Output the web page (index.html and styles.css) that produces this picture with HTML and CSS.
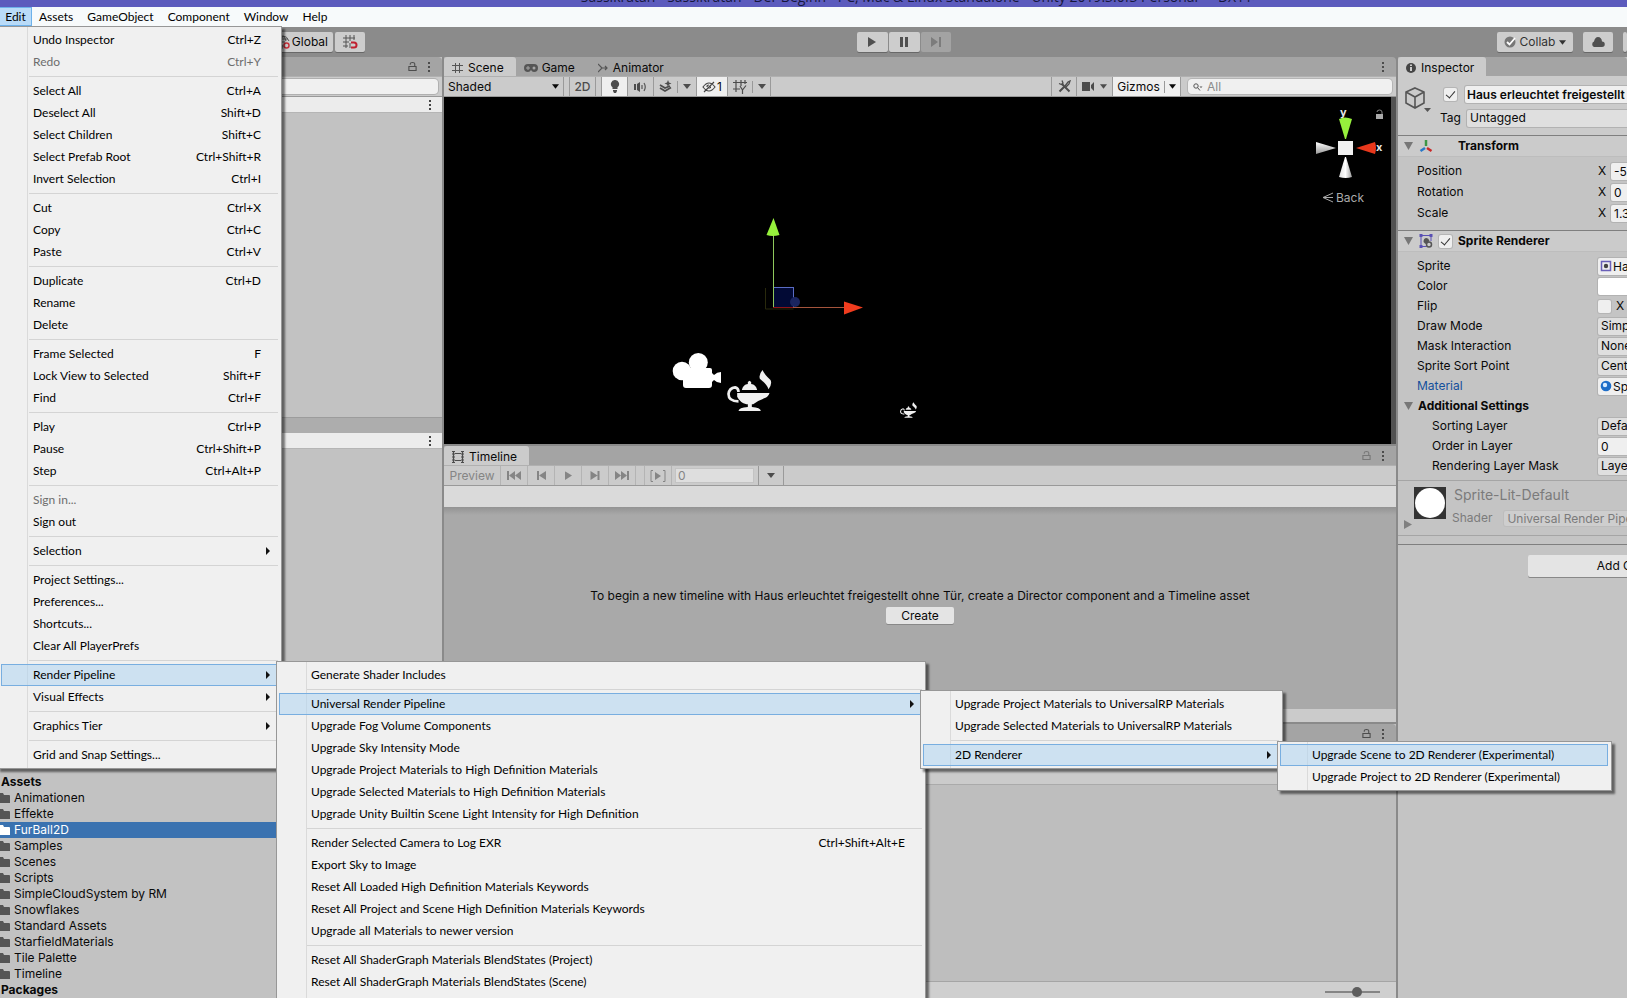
FILE: index.html
```
<!DOCTYPE html>
<html lang="en">
<head>
<meta charset="utf-8">
<title>Unity Editor</title>
<link rel="stylesheet" href="styles.css">
</head>
<body>
<svg class="defs" aria-hidden="true">
  <symbol id="lock" viewBox="0 0 10 11"><path d="M1 5.500h8v4.500h-8zM2.500 3.500V2.500q0-1.500 2.500-1.500t2.500 1.500v3" fill="none" stroke="currentColor" stroke-width="1.200"/></symbol>
  <symbol id="dots" viewBox="0 0 4 12"><path d="M1 1h2v2H1zM1 5h2v2H1zM1 9h2v2H1z" fill="currentColor"/></symbol>
  <symbol id="down" viewBox="0 0 8 5"><path d="M0 0h8L4 5z" fill="currentColor"/></symbol>
  <symbol id="folder" viewBox="0 0 12 12"><path d="M0 1h5l1 2h5q1 0 1 1v7H0z" fill="currentColor"/></symbol>
  <symbol id="next" viewBox="0 0 12 10"><path d="M1 0l7 5-7 5zM9 0h2v10H9z" fill="currentColor"/></symbol>
  <symbol id="play" viewBox="0 0 8 10"><path d="M0 0l8 5-8 5z" fill="currentColor"/></symbol>
  <symbol id="lamp" viewBox="0 0 134 123">
    <path d="M34 94Q4 94 4 72 6 54 24 52 34 54 34 66" fill="none" stroke="#efefef" stroke-width="8"/>
    <path d="M30 69H127Q124 81 111 85Q90 92 78 103H58Q38 97 30 80zM44 60Q48 44 62 42V36l5-4 5 4v6Q86 44 90 60zM62 103h12v8q26 2 27 12H34q1-10 28-12zM106 0Q112 14 130 30Q136 42 124 58Q122 46 98 26Q94 14 106 0z" fill="#efefef"/>
  </symbol>
</svg>

<header class="titlebar"><span>Sassikratan - Sassikratan - Der Beginn - PC, Mac &amp; Linux Standalone - Unity 2019.3.0f3 Personal - &lt;DX11&gt;</span></header>

<nav class="menubar">
  <div class="menubar-item">
    <button class="menubar-button open">Edit</button>
    <ul class="menu menu-edit">
      <li><button class="entry">Undo Inspector<kbd>Ctrl+Z</kbd></button></li>
      <li><button class="entry" disabled>Redo<kbd>Ctrl+Y</kbd></button></li>
      <li class="rule"></li>
      <li><button class="entry">Select All<kbd>Ctrl+A</kbd></button></li>
      <li><button class="entry">Deselect All<kbd>Shift+D</kbd></button></li>
      <li><button class="entry">Select Children<kbd>Shift+C</kbd></button></li>
      <li><button class="entry">Select Prefab Root<kbd>Ctrl+Shift+R</kbd></button></li>
      <li><button class="entry">Invert Selection<kbd>Ctrl+I</kbd></button></li>
      <li class="rule"></li>
      <li><button class="entry">Cut<kbd>Ctrl+X</kbd></button></li>
      <li><button class="entry">Copy<kbd>Ctrl+C</kbd></button></li>
      <li><button class="entry">Paste<kbd>Ctrl+V</kbd></button></li>
      <li class="rule"></li>
      <li><button class="entry">Duplicate<kbd>Ctrl+D</kbd></button></li>
      <li><button class="entry">Rename</button></li>
      <li><button class="entry">Delete</button></li>
      <li class="rule"></li>
      <li><button class="entry">Frame Selected<kbd>F</kbd></button></li>
      <li><button class="entry">Lock View to Selected<kbd>Shift+F</kbd></button></li>
      <li><button class="entry">Find<kbd>Ctrl+F</kbd></button></li>
      <li class="rule"></li>
      <li><button class="entry">Play<kbd>Ctrl+P</kbd></button></li>
      <li><button class="entry">Pause<kbd>Ctrl+Shift+P</kbd></button></li>
      <li><button class="entry">Step<kbd>Ctrl+Alt+P</kbd></button></li>
      <li class="rule"></li>
      <li><button class="entry" disabled>Sign in...</button></li>
      <li><button class="entry">Sign out</button></li>
      <li class="rule"></li>
      <li><button class="entry parent">Selection</button></li>
      <li class="rule"></li>
      <li><button class="entry">Project Settings...</button></li>
      <li><button class="entry">Preferences...</button></li>
      <li><button class="entry">Shortcuts...</button></li>
      <li><button class="entry">Clear All PlayerPrefs</button></li>
      <li class="rule"></li>
      <li>
        <button class="entry parent active">Render Pipeline</button>
        <ul class="menu submenu menu-pipeline">
          <li><button class="entry">Generate Shader Includes</button></li>
          <li class="rule"></li>
          <li>
            <button class="entry parent active">Universal Render Pipeline</button>
            <ul class="menu submenu menu-universal">
              <li><button class="entry">Upgrade Project Materials to UniversalRP Materials</button></li>
              <li><button class="entry">Upgrade Selected Materials to UniversalRP Materials</button></li>
              <li class="rule"></li>
              <li>
                <button class="entry parent active">2D Renderer</button>
                <ul class="menu submenu menu-renderer">
                  <li><button class="entry active">Upgrade Scene to 2D Renderer (Experimental)</button></li>
                  <li><button class="entry">Upgrade Project to 2D Renderer (Experimental)</button></li>
                </ul>
              </li>
            </ul>
          </li>
          <li><button class="entry">Upgrade Fog Volume Components</button></li>
          <li><button class="entry">Upgrade Sky Intensity Mode</button></li>
          <li><button class="entry">Upgrade Project Materials to High Definition Materials</button></li>
          <li><button class="entry">Upgrade Selected Materials to High Definition Materials</button></li>
          <li><button class="entry">Upgrade Unity Builtin Scene Light Intensity for High Definition</button></li>
          <li class="rule"></li>
          <li><button class="entry">Render Selected Camera to Log EXR<kbd>Ctrl+Shift+Alt+E</kbd></button></li>
          <li><button class="entry">Export Sky to Image</button></li>
          <li><button class="entry">Reset All Loaded High Definition Materials Keywords</button></li>
          <li><button class="entry">Reset All Project and Scene High Definition Materials Keywords</button></li>
          <li><button class="entry">Upgrade all Materials to newer version</button></li>
          <li class="rule"></li>
          <li><button class="entry">Reset All ShaderGraph Materials BlendStates (Project)</button></li>
          <li><button class="entry">Reset All ShaderGraph Materials BlendStates (Scene)</button></li>
        </ul>
      </li>
      <li><button class="entry parent">Visual Effects</button></li>
      <li class="rule"></li>
      <li><button class="entry parent">Graphics Tier</button></li>
      <li class="rule"></li>
      <li><button class="entry">Grid and Snap Settings...</button></li>
    </ul>
  </div>
  <button class="menubar-button">Assets</button>
  <button class="menubar-button">GameObject</button>
  <button class="menubar-button">Component</button>
  <button class="menubar-button">Window</button>
  <button class="menubar-button">Help</button>
</nav>

<div class="toolbar">
  <div class="tools">
    <button class="tool global">
      <svg width="14" height="16" viewBox="0 0 14 16" fill="none"><path d="M7 2a6 6 0 1 0 0 12M7 2q4 0 6 5M7 2q-4 5 0 11M1 8h8M7 2q3 3 3 5M2 5h10" stroke="#555"/><circle cx="10.500" cy="11.500" r="2.500" stroke="#c8323c" stroke-width="1.500"/></svg>Global</button>
    <button class="tool snap" aria-label="Grid snapping">
      <svg width="16" height="16" viewBox="0 0 16 16" fill="none"><path d="M4 1v13M8 1v6M12 1v5M1 4h12M1 8h6M1 12h5M8 9v5" stroke="#555"/><path d="M9 8.500h3a2.500 2.500 0 0 1 0 5H9" stroke="#c02030" stroke-width="2"/></svg></button>
  </div>
  <span class="space-left"></span>
  <div class="playback">
    <button class="tool" aria-label="Play"><svg width="8" height="10"><use href="#play"/></svg></button>
    <button class="tool" aria-label="Pause"><svg width="8" height="10" viewBox="0 0 8 10"><path d="M0 0h3v10H0zM5 0h3v10H5z" fill="currentColor"/></svg></button>
    <button class="tool" aria-label="Step" disabled><svg width="12" height="10"><use href="#next"/></svg></button>
  </div>
  <span class="space-right"></span>
  <div class="services">
    <button class="tool collab"><svg width="12" height="12" viewBox="0 0 12 12"><circle cx="6" cy="6" r="5.500" fill="#777"/><path d="M3 6l2.500 2.500L11 2" fill="none" stroke="#fff" stroke-width="1.800"/></svg>Collab<svg width="7" height="5"><use href="#down"/></svg></button>
    <button class="tool cloud" aria-label="Services"><svg width="14" height="10" viewBox="0 0 14 10"><path d="M3 10a3 3 0 0 1 0-5.500Q4 0 7 0q3.500 0 4 4.500a2.700 2.700 0 0 1 0 5.500z" fill="currentColor"/></svg></button>
    <button class="tool account" aria-label="Account"></button>
  </div>
</div>

<main class="workspace">
  <div class="left">
    <div class="upper">
      <section class="hierarchy">
        <div class="tabs"><span class="fill"></span><svg width="9" height="11"><use href="#lock"/></svg><svg class="end" width="4" height="12"><use href="#dots"/></svg></div>
        <div class="bar"><input class="search" aria-label="Search hierarchy"></div>
        <div class="scene-row"><svg width="4" height="12"><use href="#dots"/></svg></div>
        <div class="tree-a"></div>
        <div class="band"></div>
        <div class="scene-row"><svg width="4" height="12"><use href="#dots"/></svg></div>
        <div class="tree-b"></div>
      </section>
      <div class="center">
        <section class="scene">
          <div class="tabs">
            <button class="tab current"><svg width="11" height="12" viewBox="0 0 11 12"><path d="M3.500 1v10M7.500 1v10M0 3.500h11M0 8.500h11" stroke="currentColor" fill="none"/></svg>Scene</button>
            <button class="tab game"><svg width="14" height="8" viewBox="0 0 14 8"><path d="M4 0h6a4 4 0 0 1 0 8Q8 8 7 6 6 8 4 8a4 4 0 0 1 0-8z" fill="#555"/><circle cx="10" cy="4" r="1.500" fill="#a5a5a5"/><path d="M2 4h4M4 2v4" stroke="#a5a5a5"/></svg>Game</button>
            <button class="tab animator"><svg width="10" height="10" viewBox="0 0 10 10"><path d="M0 1l4 4-4 4M4 5h5M7 3l2 2-2 2" fill="none" stroke="#555" stroke-width="1.200"/></svg>Animator</button>
            <span class="fill"></span><svg class="end" width="4" height="12"><use href="#dots"/></svg>
          </div>
          <div class="bar">
            <button class="cell shaded">Shaded<svg width="7" height="5"><use href="#down"/></svg></button>
            <span class="notch"></span>
            <button class="cell two-d">2D</button>
            <span class="notch"></span>
            <button class="cell lit" aria-label="Lighting"><svg width="10" height="13" viewBox="0 0 10 13"><path d="M5 0a4 4 0 0 1 2.500 7.200V9h-5V7.200A4 4 0 0 1 5 0zM3 10h4v1L6 13H4l-1-2z" fill="#4c4c4c"/></svg></button>
            <button class="cell" aria-label="Audio"><svg width="13" height="10" viewBox="0 0 13 10"><path d="M0 2h2v6H0zM3 2l3-2v10L3 8z" fill="#4c4c4c"/><path d="M8 3v4M10 1q2.500 4 0 8" stroke="#555" stroke-width="1.200" fill="none"/></svg></button>
            <button class="cell split" aria-label="Effects"><svg width="13" height="13" viewBox="0 0 13 13"><path d="M9 0l1 2.500L12.500 3.500 10 4.500 9 7 8 4.500 5.500 3.500 8 2.500z" fill="#4c4c4c"/><path d="M1 5l5 3 5-2M1 8l5 3 6-3.500" fill="none" stroke="#4c4c4c" stroke-width="1.800"/></svg><i></i><svg width="8" height="5"><use href="#down"/></svg></button>
            <button class="cell lit eye"><svg width="14" height="12" viewBox="0 0 14 12"><path d="M1 6q6-8 12 0-6 8-12 0zM2 11L12 1M5 6q0-2 2-2" fill="none" stroke="#444" stroke-width="1.200"/><path d="M6 8l3-3v2z" fill="#444"/></svg>1</button>
            <button class="cell split" aria-label="Grid"><svg width="14" height="14" viewBox="0 0 14 14"><path d="M3 0v12M8 0v6M12 0v4M0 2.500h14M0 9h7M7 6l2.500 4L13 5.500M9.500 10v4" stroke="#4c4c4c" stroke-width="1.200" fill="none"/></svg><i></i><svg width="8" height="5"><use href="#down"/></svg></button>
            <span class="fill"></span>
            <button class="cell first" aria-label="Tools"><svg width="13" height="13" viewBox="0 0 13 13"><path d="M4 4l7.500 7.500M1.500 11.500l5-5" stroke="#4c4c4c" stroke-width="2"/><path d="M7 6l3-4 2-1-1 3-3 3M1 3.500l2.500 1L5 3 4 .5" stroke="#4c4c4c" stroke-width="1.300" fill="none"/></svg></button>
            <button class="cell camera" aria-label="Camera"><svg width="12" height="9" viewBox="0 0 12 9"><path d="M0 0h8v9H0zM9 3l3-3v9L9 6z" fill="#4c4c4c"/></svg><svg width="7" height="5"><use href="#down"/></svg></button>
            <button class="cell lit gizmos">Gizmos<i></i><svg width="7" height="5"><use href="#down"/></svg></button>
            <label class="find"><svg width="10" height="8" viewBox="0 0 10 8"><circle cx="3" cy="3" r="2.200" fill="none" stroke="#555"/><path d="M4.500 4.500L7 7.500" stroke="#555"/><path d="M6.500 3.500h3L8 5z" fill="#555"/></svg><input aria-label="Search scene" placeholder="All"></label>
          </div>
          <div class="viewport">
            <svg class="objects" width="500" height="310" viewBox="0 0 500 310">
              <path d="M321.500 191v21h28" fill="none" stroke="#29290c"/>
              <rect x="329.500" y="190.500" width="20" height="20" fill="#020a35" stroke="#5a6cc4"/>
              <circle cx="351" cy="205" r="5" fill="#1a2560"/>
              <path d="M329.500 210V138" stroke="#8fc85c"/><path d="M329.500 121l-7 17q6 2 13 0z" fill="#96f03c"/>
              <path d="M329 210.500h28" stroke="#8c1418"/><path d="M349 210.500h52" stroke="#a5543c"/><path d="M419 210.500l-19-6v13z" fill="#f03c1e"/>
              <g fill="#fff"><circle cx="238" cy="274" r="9.300"/><circle cx="254.300" cy="265.500" r="9.500"/><path d="M239 271h27q2 0 2 2v3l2 2q3-3 7-3v11q-4 0-7-3l-2 2v3q0 3-3 3h-23q-3 0-3-3z"/></g>
              <use href="#lamp" x="283" y="273" width="45" height="41"/>
              <use href="#lamp" x="456" y="305" width="17" height="16"/>
            </svg>
            <svg class="compass" width="81" height="105" viewBox="0 0 81 105">
              <defs>
                <linearGradient id="gx"><stop offset="0" stop-color="#ddd"/><stop offset=".5" stop-color="#fff"/><stop offset="1" stop-color="#999"/></linearGradient>
                <linearGradient id="gy" x2="0" y2="1"><stop offset="0" stop-color="#fff"/><stop offset="1" stop-color="#999"/></linearGradient>
              </defs>
              <text x="30" y="11" class="axis">y</text><text x="66" y="46" class="axis">x</text>
              <path d="M29 14q6-3 13 0l-6 20h-1z" fill="#96f03c"/><path d="M28 36h15v14H28z" fill="#f0f0f0"/>
              <path d="M6 37l20 6-20 6z" fill="url(#gy)"/><path d="M46 43l19-6q2 6 0 12z" fill="#e8381c"/><path d="M35 52h1l6 20q-6 2-13 0z" fill="url(#gx)"/>
              <path d="M23 88l-10 4.500 10 4.500M13 92.500h10" fill="none" stroke="#aaa"/>
              <text x="26" y="97" class="view-name">Back</text>
              <path d="M66 9h7v5h-7z" fill="#aaa"/><path d="M67 7q0-2 2.500-2T72 7v2" fill="none" stroke="#888"/>
            </svg>
          </div>
        </section>
        <section class="timeline">
          <div class="tabs">
            <button class="tab current"><svg width="12" height="12" viewBox="0 0 12 12"><path d="M1.500 0v12M10.500 0v12M3 2.500h6M3 9.500h6" stroke="#4c4c4c" stroke-width="1.200" fill="none"/><path d="M0 .5h3M0 3h3M0 6h3M0 9h3M0 11.500h3M9 .5h3M9 3h3M9 6h3M9 9h3M9 11.500h3" stroke="#4c4c4c"/></svg>Timeline</button>
            <span class="fill"></span><svg class="faded" width="9" height="11"><use href="#lock"/></svg><svg class="end" width="4" height="12"><use href="#dots"/></svg>
          </div>
          <div class="bar transport">
            <button class="cell preview" disabled>Preview</button>
            <button class="cell" aria-label="Start" disabled><svg width="14" height="9" viewBox="0 0 14 9"><path d="M0 0h2v9H0zM8 0v9L2 4.500zM14 0v9L8 4.500z" fill="currentColor"/></svg></button>
            <button class="cell" aria-label="Previous frame" disabled><svg width="9" height="9" viewBox="0 0 9 9"><path d="M0 0h2v9H0zM9 0v9L2 4.500z" fill="currentColor"/></svg></button>
            <button class="cell" aria-label="Play timeline" disabled><svg width="7" height="9" viewBox="0 0 8 10"><use href="#play"/></svg></button>
            <button class="cell" aria-label="Next frame" disabled><svg width="10" height="9" viewBox="0 0 9 9"><path d="M7 0h2v9H7zM0 0v9l7-4.500z" fill="currentColor"/></svg></button>
            <button class="cell" aria-label="End" disabled><svg width="14" height="9" viewBox="0 0 14 9"><path d="M12 0h2v9h-2zM6 0v9l6-4.500zM0 0v9l6-4.500z" fill="currentColor"/></svg></button>
            <span class="slot"></span>
            <button class="cell" aria-label="Play range" disabled><svg width="16" height="12" viewBox="0 0 16 12"><path d="M3 .5H1v11h2M13 .5h2v11h-2" fill="none" stroke="currentColor"/><path d="M5 2l6 4-6 4z" fill="currentColor"/></svg></button>
            <input class="frame" aria-label="Frame" value="0" disabled>
            <button class="cell pick" aria-label="Timeline selector"><svg width="8" height="5"><use href="#down"/></svg></button>
          </div>
          <div class="ruler"></div>
          <div class="empty">
            <p>To begin a new timeline with Haus erleuchtet freigestellt ohne Tür, create a Director component and a Timeline asset</p>
            <button class="push">Create</button>
          </div>
          <div class="scroller"></div>
        </section>
      </div>
    </div>
    <section class="project">
      <div class="tabs"><span class="fill"></span><svg width="9" height="11"><use href="#lock"/></svg><svg class="end" width="4" height="12"><use href="#dots"/></svg></div>
      <div class="project-body">
        <ul class="folders">
          <li class="root">Assets</li>
          <li><svg width="12" height="12"><use href="#folder"/></svg>Animationen</li>
          <li><svg width="12" height="12"><use href="#folder"/></svg>Effekte</li>
          <li class="picked"><svg width="12" height="12"><use href="#folder"/></svg>FurBall2D</li>
          <li><svg width="12" height="12"><use href="#folder"/></svg>Samples</li>
          <li><svg width="12" height="12"><use href="#folder"/></svg>Scenes</li>
          <li><svg width="12" height="12"><use href="#folder"/></svg>Scripts</li>
          <li><svg width="12" height="12"><use href="#folder"/></svg>SimpleCloudSystem by RM</li>
          <li><svg width="12" height="12"><use href="#folder"/></svg>Snowflakes</li>
          <li><svg width="12" height="12"><use href="#folder"/></svg>Standard Assets</li>
          <li><svg width="12" height="12"><use href="#folder"/></svg>StarfieldMaterials</li>
          <li><svg width="12" height="12"><use href="#folder"/></svg>Tile Palette</li>
          <li><svg width="12" height="12"><use href="#folder"/></svg>Timeline</li>
          <li class="root">Packages</li>
        </ul>
        <div class="files">
          <div class="crumbs"></div>
          <div class="grid"></div>
          <div class="status"><input type="range" aria-label="Icon size" min="0" max="100" value="60"></div>
        </div>
      </div>
    </section>
  </div>

  <aside class="inspector">
    <div class="tabs"><button class="tab current"><svg width="10" height="10" viewBox="0 0 10 10"><circle cx="5" cy="5" r="5" fill="#444"/><path d="M4 4h2v4H4zM4 1.500h2V3H4z" fill="#cbcbcb"/></svg>Inspector</button></div>
    <div class="object">
      <svg class="cube" width="26" height="27" viewBox="0 0 26 27"><path d="M10 2l9 4v11L10 22l-9-5V6zM1 6l9 5 9-5M10 11v11" fill="none" stroke="#555" stroke-width="1.600"/><path d="M19 22h7l-3.500 4z" fill="#555"/></svg>
      <div class="object-lines">
        <div class="object-line"><input type="checkbox" class="tick" aria-label="Active" checked><input class="field name" aria-label="Name" value="Haus erleuchtet freigestellt ohne Tür"></div>
        <div class="object-line"><label for="tag">Tag</label><select id="tag" class="field drop"><option>Untagged</option></select></div>
      </div>
    </div>
    <section class="component transform">
      <h2><svg class="fold" width="9" height="8" viewBox="0 0 9 8"><path d="M0 0h9L4.500 8z" fill="currentColor"/></svg><svg width="14" height="14" viewBox="0 0 13 14"><path d="M6.500 1v6" stroke="#3c9646" stroke-width="2.500"/><path d="M5.500 9L1 12" stroke="#2878c8" stroke-width="2.500"/><path d="M7.500 9l4.500 3" stroke="#c82828" stroke-width="2.500"/></svg><span class="tick-gap"></span>Transform</h2>
      <div class="prop"><label for="px">Position</label><span>X</span><input id="px" class="field" value="-5.2"></div>
      <div class="prop"><label for="rx">Rotation</label><span>X</span><input id="rx" class="field" value="0"></div>
      <div class="prop"><label for="sx">Scale</label><span>X</span><input id="sx" class="field" value="1.3"></div>
    </section>
    <section class="component">
      <h2><svg class="fold" width="9" height="8" viewBox="0 0 9 8"><path d="M0 0h9L4.500 8z" fill="currentColor"/></svg><svg width="14" height="14" viewBox="0 0 13 14"><path d="M7 12.500H1.500v-11h10V7" fill="none" stroke="#5a50b4"/><path d="M0 0h3v3H0zM10 0h3v3h-3zM0 11h3v3H0z" fill="#5a50b4"/><path d="M4 8q0-4 3-4 2 0 3 3l-4 3z" fill="#555"/><circle cx="9.500" cy="10.500" r="2.500" fill="none" stroke="#555" stroke-width="1.500"/></svg><input type="checkbox" class="tick" aria-label="Sprite Renderer enabled" checked>Sprite Renderer</h2>
      <div class="prop"><label for="sp">Sprite</label><svg class="pre" width="12" height="12" viewBox="0 0 12 12"><path d="M1.500 1.500h9v9h-9z" fill="none" stroke="#6a60b8" stroke-width="1.500"/><circle cx="6" cy="6" r="2.200" fill="#444"/></svg><input id="sp" class="field ref" value="Haus erleuchtet"></div>
      <div class="prop"><label for="co">Color</label><input id="co" class="field white"></div>
      <div class="prop"><label for="fl">Flip</label><input id="fl" type="checkbox" class="tick flip"><span>X</span></div>
      <div class="prop"><label for="dm">Draw Mode</label><select id="dm" class="field drop"><option>Simple</option></select></div>
      <div class="prop"><label for="mi">Mask Interaction</label><select id="mi" class="field drop"><option>None</option></select></div>
      <div class="prop"><label for="ss">Sprite Sort Point</label><select id="ss" class="field drop"><option>Center</option></select></div>
      <div class="prop linked"><label for="ma">Material</label><svg class="pre" width="12" height="12" viewBox="0 0 12 12"><circle cx="6" cy="6" r="5.300" fill="#1e6ec8"/><circle cx="5" cy="5" r="2.200" fill="#d8ecff"/></svg><input id="ma" class="field ref" value="Sprite-Lit-Default"></div>
      <h3><svg width="9" height="8" viewBox="0 0 9 8"><path d="M0 0h9L4.500 8z" fill="currentColor"/></svg>Additional Settings</h3>
      <div class="prop nested"><label for="sl">Sorting Layer</label><select id="sl" class="field drop"><option>Default</option></select></div>
      <div class="prop nested"><label for="ol">Order in Layer</label><input id="ol" class="field" value="0"></div>
      <div class="prop nested"><label for="rl">Rendering Layer Mask</label><select id="rl" class="field drop"><option>Layer1</option></select></div>
    </section>
    <section class="material">
      <svg class="unfold" width="8" height="9" viewBox="0 0 8 9"><path d="M0 0v9l8-4.500z" fill="#808080"/></svg>
      <svg width="32" height="32" viewBox="0 0 32 32"><path d="M0 0h32v32H0z" fill="#333"/><circle cx="16" cy="16" r="15" fill="#fff"/></svg>
      <div class="material-text">
        <div class="material-name">Sprite-Lit-Default</div>
        <div class="shader"><label for="sh">Shader</label><select id="sh" class="field drop" disabled><option>Universal Render Pipeline/2D/Sprite-Lit-Default</option></select></div>
      </div>
    </section>
    <div class="add"><button class="push">Add Component</button></div>
  </aside>
</main>
</body>
</html>
```

FILE: styles.css
```
* { box-sizing: border-box; }
body {
  margin: 0; height: 100vh; overflow: hidden;
  display: flex; flex-direction: column;
  font: 12px/16px Inter, "Liberation Sans", sans-serif;
  color: #090909; background: #8a8a8a;
}
button, input, select { font: inherit; color: inherit; margin: 0; padding: 0; border: 0; border-radius: 0; background: none; }
button { white-space: nowrap; }
input { min-width: 0; }
ul, p, h2, h3 { margin: 0; padding: 0; list-style: none; font-size: inherit; }
svg { flex: none; display: block; }
.defs { position: absolute; width: 0; height: 0; }
.fill { flex: 1; }

/* Title and menu bar */
.titlebar { flex: none; height: 7px; background: #5c5bbd; display: flex; align-items: flex-end; justify-content: center; padding: 0 0 3px 214px; color: #17173c; font: 14px/14px "Open Sans", sans-serif; white-space: nowrap; overflow: hidden; }
.menubar { flex: none; height: 20px; display: flex; background: #f7fafb; font-family: Lato, "Open Sans", sans-serif; color: #000; }
.menubar-item { position: relative; }
.menubar-button { height: 19px; padding: 0 7px; }
.menubar-button.open { width: 32px; padding: 0; background: #b9dbf8; border: 1px solid #6db1ea; border-left: 0; }

.menu { position: absolute; z-index: 5; padding: 2px 3px; border: 1px solid #979797; background: linear-gradient(90deg, transparent 29px, #dadada 29px, #dadada 30px, transparent 30px) #f0f0f0; box-shadow: 3px 3px 2px rgba(0, 0, 0, .5); }
.menu li { position: relative; }
.menu-edit { left: -3px; top: 19px; width: 285px; }
.submenu { left: calc(100% - 2px); top: -3px; padding-left: 2px; }
.menu-pipeline { width: 650px; padding-bottom: 12px; }
.menu-universal { width: 363px; }
.menu-renderer { width: 335px; }
.entry { display: flex; align-items: center; width: 100%; height: 22px; padding: 0 16px 0 31px; border: 1px solid transparent; text-align: left; }
.entry:disabled { color: #6d6d6d; }
.entry kbd { font: inherit; margin-left: auto; }
.entry.active { background: rgba(176, 214, 243, .55); border-color: #78aee0; }
.parent { padding-right: 7px; }
.parent::after { content: ""; margin-left: auto; border: 4px solid transparent; border-left-color: #111; border-right: 0; }
.rule { height: 7px; margin-left: 28px; padding-top: 3px; }
.rule::after { content: ""; display: block; height: 1px; background: #d4d4d4; }

/* Main toolbar */
.toolbar { flex: none; height: 30px; display: flex; align-items: center; background: #8b8b8b; }
.tool { height: 20px; display: flex; align-items: center; justify-content: center; background: #cdcdcd; border-radius: 2px; box-shadow: 0 1px 0 #686868; color: #505050; }
.tools { width: 365px; display: flex; justify-content: flex-end; gap: 2px; }
.global { gap: 2px; padding-right: 5px; color: #090909; }
.snap { width: 30px; }
.space-left { flex: 9; }
.space-right { flex: 10; }
.playback { display: flex; gap: 1px; }
.playback .tool { width: 31px; }
.playback .tool:disabled { width: 30px; background: #a3a3a3; color: #7c7c7c; box-shadow: none; }
.services { display: flex; gap: 10px; }
.collab { width: 76px; gap: 4px; color: #333; }
.cloud { width: 30px; }
.account { width: 4px; }

/* Shell */
.workspace { flex: 1; min-height: 0; display: flex; gap: 2px; }
.left { flex: 1; min-width: 0; display: flex; flex-direction: column; gap: 2px; }
.upper { flex: 665 1 0; min-height: 0; display: flex; gap: 2px; }
.center { flex: 1; min-width: 0; display: flex; flex-direction: column; gap: 2px; }
.hierarchy { width: 442px; display: flex; flex-direction: column; background: #c2c2c2; }
.scene { flex: 387 1 0; min-height: 0; display: flex; flex-direction: column; }
.timeline { flex: 276 1 0; min-height: 0; display: flex; flex-direction: column; background: #a9a9a9; }
.project { flex: 274 1 0; min-height: 0; display: flex; flex-direction: column; background: #c2c2c2; }

.tabs { flex: none; height: 19px; display: flex; align-items: center; gap: 10px; background: #a4a4a4; color: #4c4c4c; border-radius: 0 4px 0 0; }
.tab { height: 19px; display: flex; align-items: center; gap: 5px; padding: 2px 12px 0 8px; color: #090909; }
.tab.current { background: #cbcbcb; border-radius: 3px 3px 0 0; }
.tab svg { color: #555; }
.tabs .tab + .tab { margin-left: -10px; }
.tabs .game { gap: 4px; }
.tabs .animator { padding-left: 11px; }
.end { margin-right: 11px; }
.faded { opacity: .5; }
.bar { flex: none; height: 21px; display: flex; background: #cbcbcb; border-top: 1px solid #b0b0b0; border-bottom: 1px solid #999; }
.cell { height: 19px; min-width: 26px; display: flex; align-items: center; justify-content: center; border-right: 1px solid #9a9a9a; color: #4c4c4c; }
.cell i { width: 1px; height: 12px; background: #999; }
.notch { width: 6px; border-right: 1px solid #9a9a9a; }
.lit { background: #efefef; color: #090909; }
.shaded { width: 120px; justify-content: space-between; padding: 0 4px; color: #090909; }
.two-d { font-weight: 500; }
.split { width: 43px; gap: 5px; }
.eye { width: 31px; gap: 1px; }
.first { border-left: 1px solid #9a9a9a; }
.camera { width: 36px; gap: 6px; }
.gizmos { width: 68px; gap: 4px; }
.find { width: 204px; height: 15px; margin: 2px 4px 0 7px; display: flex; align-items: center; gap: 4px; padding-left: 5px; border-radius: 4px; background: #f0f0f0; box-shadow: 0 0 0 1px #b5b5b5; }
.find input { flex: 1; height: 15px; }
.find input::placeholder { color: #8a8a8a; opacity: 1; }

/* Hierarchy */
.search { flex: 1; height: 15px; margin: 2px 4px 0; border-radius: 4px; background: #f0f0f0; box-shadow: 0 0 0 1px #b0b0b0; }
.scene-row { flex: none; height: 16px; display: flex; align-items: center; justify-content: flex-end; padding-right: 10px; background: #ececec; color: #444; border-bottom: 1px solid #b5b5b5; }
.tree-a { flex: 304; }
.band { flex: none; height: 16px; background: #adadad; border-top: 1px solid #9c9c9c; }
.tree-b { flex: 273; }

/* Scene view */
.viewport { flex: 1; min-height: 0; position: relative; overflow: hidden; background: #000; border-right: 5px solid #525252; }
.objects { position: absolute; left: 0; top: 0; overflow: visible; }
.compass { position: absolute; right: 0; top: 8px; }
.axis { font: 700 11px Inter, sans-serif; fill: #e6e6e6; }
.view-name { font: 12px Inter, sans-serif; fill: #aaa; }

/* Timeline */
.transport .cell { width: 27px; }
.transport .cell:disabled { color: #858585; border-color: #b4b4b4; }
.transport .preview { width: 57px; }
.slot { width: 9px; border-right: 1px solid #b4b4b4; }
.frame { width: 79px; height: 15px; margin: 2px 4px 0 3px; padding-left: 2px; background: #dedede; color: #858585; border: 1px solid #c3c3c3; }
.transport .pick { width: 23px; border-left: 1px solid #999; }
.ruler { flex: none; height: 21px; background: #dadada; }
.empty { flex: 1; display: flex; flex-direction: column; align-items: center; padding-top: 81px; gap: 3px; background: linear-gradient(#939393, #a9a9a9 8px); text-align: center; }
.push { height: 17px; padding: 0 15px; border-radius: 2px; background: #e4e4e4; box-shadow: 0 1px 0 #888; }
.scroller { flex: none; height: 13px; background: #cbcbcb; }

/* Project */
.project-body { flex: 1; min-height: 0; display: flex; }
.folders { width: 276px; padding-top: 31px; }
.folders li { height: 16px; display: flex; align-items: center; gap: 4px; color: #090909; }
.folders svg { color: #555; margin-left: -2px; }
.folders .root { padding-left: 1px; font-weight: 700; }
.folders .picked, .picked svg { background: #3a72b0; color: #fff; }
.files { flex: 1; display: flex; flex-direction: column; background: #bebebe; }
.crumbs { height: 42px; background: #cbcbcb; border-bottom: 1px solid #aaa; }
.grid { flex: 1; }
.status { height: 17px; display: flex; align-items: center; justify-content: flex-end; padding: 4px 16px 0 0; background: #cfcfcf; border-top: 1px solid #a5a5a5; }
.status input { appearance: none; width: 55px; height: 10px; background: linear-gradient(#858585, #858585) center / 100% 2px no-repeat; }
.status input::-webkit-slider-thumb { appearance: none; width: 10px; height: 10px; border-radius: 50%; background: #5e5e5e; }

/* Inspector */
.inspector { width: 229px; overflow: hidden; background: #c4c4c4; }
.inspector .tab { gap: 5px; }
.object { height: 59px; display: flex; gap: 4px; padding: 8px 0 0 7px; background: #cbcbcb; }
.cube { margin-top: 2px; }
.object-lines { flex: 1; min-width: 0; display: flex; flex-direction: column; gap: 4px; padding-left: 5px; }
.object-line { height: 20px; display: flex; align-items: center; gap: 8px; }
.object-line .tick { margin-left: 4px; }
.object-line .drop { margin-left: -2px; }
.field { flex: 1; height: 17px; min-width: 0; padding: 0 3px; background: #efefef; border-radius: 2px 0 0 2px; box-shadow: 0 0 0 1px #b2b2b2; }
.name { font-weight: 600; padding: 0 0 0 2px; }
.drop { appearance: none; background: #dfdfdf; padding-right: 0; }
.tick { appearance: none; flex: none; width: 13px; height: 13px; border-radius: 2px; background: #efefef; box-shadow: 0 0 0 1px #b5b5b5; display: grid; place-items: center; }
.tick:checked::after { content: ""; width: 4px; height: 8px; border: solid #333; border-width: 0 1px 1px 0; rotate: 40deg; margin-top: -2px; }
.component { border-top: 1px solid #7f7f7f; padding-bottom: 4px; }
.component h2 { height: 21px; margin-bottom: 4px; display: flex; align-items: center; gap: 6px; padding-left: 6px; background: #cbcbcb; font-weight: 700; border-bottom: 1px solid #bdbdbd; }
.fold, h3 svg { color: #777; }
.tick-gap { width: 13px; }
.transform .prop { margin-bottom: 1px; }
.prop { height: 20px; display: flex; align-items: center; padding-left: 19px; }
.prop label { flex: none; width: 181px; }
.prop span { flex: none; width: 13px; }
.prop .field { padding-right: 0; }
.nested { padding-left: 34px; }
.nested label { width: 166px; }
.linked label { color: #14509c; }
.pre { margin-right: -14px; margin-left: 2px; z-index: 1; }
.prop .ref { padding-left: 15px; }
.white { background: #fff; }
.flip { margin-right: 5px; }
.component h3 { height: 20px; display: flex; align-items: center; gap: 5px; padding-left: 6px; font-weight: 700; }
.transform { padding-bottom: 6px; }
.material { height: 56px; display: flex; gap: 6px; padding: 6px 0 0 6px; border-top: 1px solid #a5a5a5; border-bottom: 1px solid #a5a5a5; color: #7b7b7b; }
.unfold { align-self: flex-end; margin-bottom: 6px; margin-right: -4px; }
.material-text { flex: 1; min-width: 0; }
.material-name { font-size: 14px; padding-left: 2px; }
.shader { height: 24px; display: flex; align-items: center; gap: 12px; margin-top: 3px; }
.shader .field { height: 15px; opacity: 1; padding-right: 0; background: #cecece; color: #7b7b7b; box-shadow: 0 0 0 1px #bdbdbd; }
.add { margin-top: 8px; border-top: 1px solid #7f7f7f; padding: 10px 0 0 130px; }
.add .push { width: 230px; height: 22px; padding: 0; }
```
